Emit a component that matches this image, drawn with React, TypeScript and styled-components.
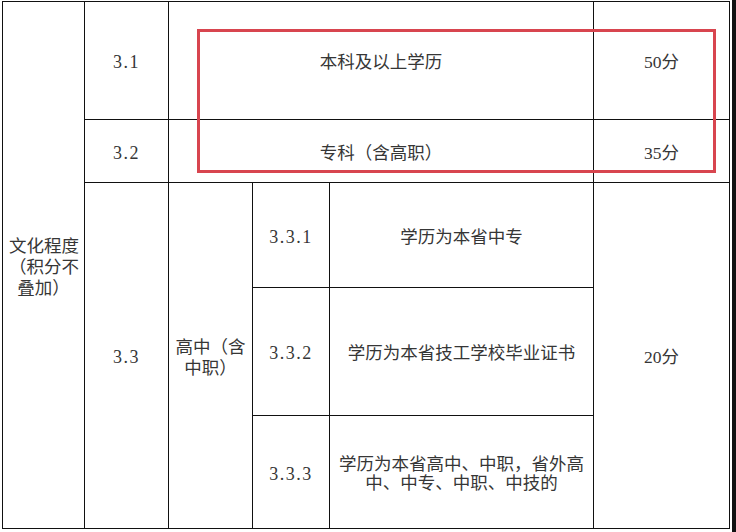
import React from 'react';
import styled, { createGlobalStyle } from 'styled-components';

const GlobalStyle = createGlobalStyle`
	html, body {
		margin: 0;
		padding: 0;
		background: #fff;
	}
`;

const Sheet = styled.div`
	position: relative;
	box-sizing: border-box;
	width: 736px;
	height: 532px;
	padding: 1px 0 0 2px;
	border-right: 4px solid #111;
	background: #fff;
	overflow: hidden;
`;

const Table = styled.table`
	width: 727px;
	table-layout: fixed;
	border-collapse: collapse;

	font-family: 'Liberation Serif', 'Noto Sans CJK SC', serif;
	color: #363636;
`;

const Row = styled.tr<{ $h: number }>`
	height: ${(p) => p.$h}px;
`;

const Cell = styled.td<{ $lh?: number; $num?: boolean }>`
	box-sizing: border-box;
	padding: 4px 6px 0;
	border: 1px solid #111;

	text-align: center;
	vertical-align: middle;
	font-size: ${(p) => (p.$num ? '18px' : '17.5px')};
	letter-spacing: ${(p) => (p.$num ? '1.5px' : '0')};
	line-height: ${(p) => p.$lh || 21}px;
	white-space: nowrap;
`;

const Score = styled.span`
	font-size: 17.5px;
	letter-spacing: 0;
`;

const Mark = styled.div`
	position: absolute;
	left: 197px;
	top: 29px;
	width: 519px;
	height: 144px;
	box-sizing: border-box;

	border: 3px solid #d8454f;
	pointer-events: none;
`;

const widths = [82, 84, 84, 77, 264, 136];

const App: React.FC = () => {
	return (
		<React.Fragment>
			<GlobalStyle />
			<Sheet>
				<Table>
					<colgroup>
						{widths.map((w, index) => (
							<col key={index} style={{ width: w }} />
						))}
					</colgroup>
					<tbody>
						<Row $h={118}>
							<Cell rowSpan={5}>
								文化程度
								<br />
								（积分不
								<br />
								叠加）
							</Cell>
							<Cell $num>3.1</Cell>
							<Cell colSpan={3}>本科及以上学历</Cell>
							<Cell>
								<Score>50分</Score>
							</Cell>
						</Row>
						<Row $h={63}>
							<Cell $num>3.2</Cell>
							<Cell colSpan={3}>专科（含高职）</Cell>
							<Cell>
								<Score>35分</Score>
							</Cell>
						</Row>
						<Row $h={105}>
							<Cell $num rowSpan={3}>
								3.3
							</Cell>
							<Cell rowSpan={3}>
								高中（含
								<br />
								中职）
							</Cell>
							<Cell $num>3.3.1</Cell>
							<Cell>学历为本省中专</Cell>
							<Cell rowSpan={3}>
								<Score>20分</Score>
							</Cell>
						</Row>
						<Row $h={128}>
							<Cell $num>3.3.2</Cell>
							<Cell>学历为本省技工学校毕业证书</Cell>
						</Row>
						<Row $h={113}>
							<Cell $num>3.3.3</Cell>
							<Cell $lh={19.5}>
								学历为本省高中、中职，省外高
								<br />
								中、中专、中职、中技的
							</Cell>
						</Row>
					</tbody>
				</Table>
				<Mark />
			</Sheet>
		</React.Fragment>
	);
};

export default App;
